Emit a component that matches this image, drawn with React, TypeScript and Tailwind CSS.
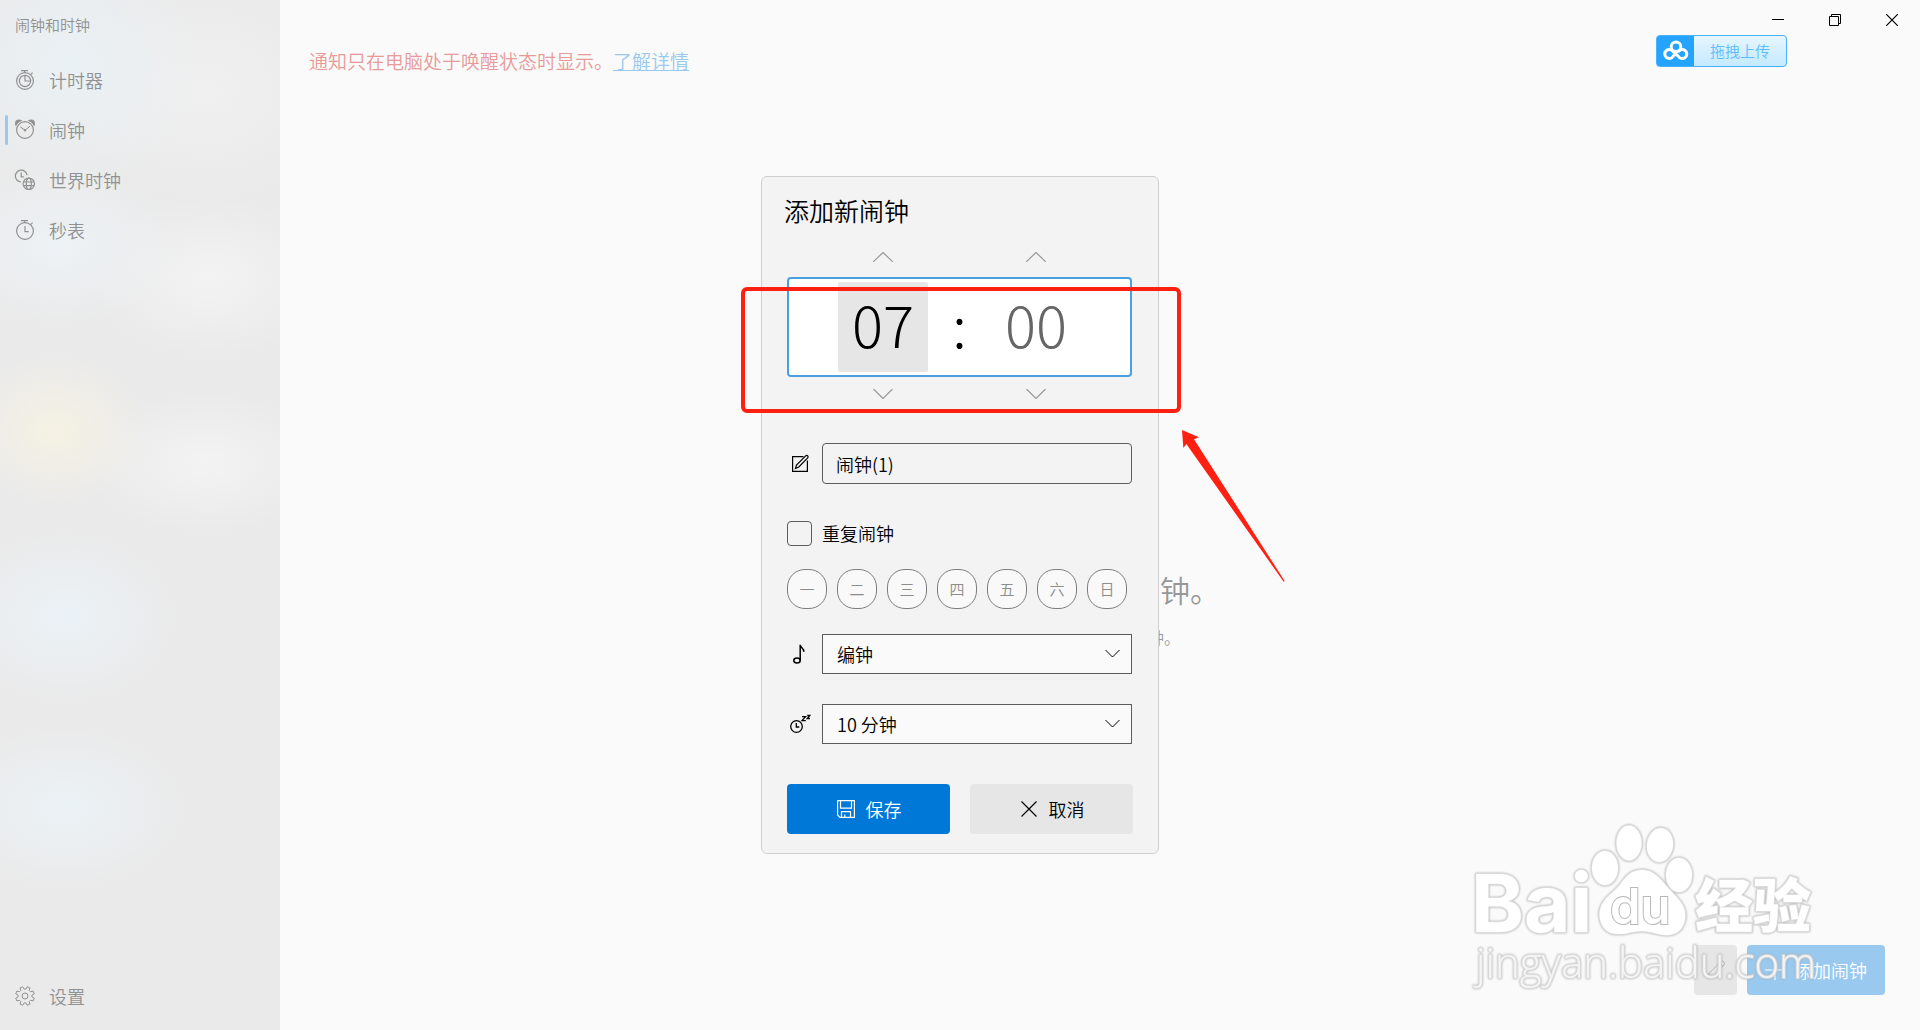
import React from "react";

const stroke = { fill: "none", stroke: "currentColor", strokeWidth: 1.2 };

const TimerIcon = () => (
    <svg width="20" height="20" viewBox="0 0 20 20" overflow="visible" {...stroke}>
        <circle cx="10" cy="11" r="8.4"/>
        <path d="M10 5.4a5.6 5.6 0 1 0 5.6 5.6H10z"/>
        <path d="M10 5.4a5.6 5.6 0 0 1 5.6 5.6M6 .7h7M9.5.7v2M15.6 4.6l2-2"/>
    </svg>
);

const AlarmIcon = () => (
    <svg width="20" height="20" viewBox="0 0 20 20" overflow="visible" {...stroke}>
        <circle cx="4" cy="3.6" r="4" fill="currentColor" stroke="none"/>
        <circle cx="16" cy="3.6" r="4" fill="currentColor" stroke="none"/>
        <circle cx="10" cy="10" r="9.8" fill="#ebebeb" stroke="none"/>
        <circle cx="10" cy="10" r="8.4"/>
        <path d="M5.2 6.800 10 10.200l5-4" strokeWidth="1"/>
        <circle cx="10" cy="10.200" r="1.200" fill="currentColor" stroke="none"/>
    </svg>
);

const WorldIcon = () => (
    <svg width="20" height="20" viewBox="0 0 20 20" overflow="visible" {...stroke}>
        <path d="M5.8 11.9A5.9 5.9 0 1 1 12.1 5.2M6.2 2.4V6.8h2.6"/>
        <circle cx="13.8" cy="13.8" r="5.7"/>
        <ellipse cx="13.8" cy="13.8" rx="2.5" ry="5.7"/>
        <path d="M8.6 12h10.4M8.6 15.6h10.4"/>
    </svg>
);

const StopwatchIcon = () => (
    <svg width="20" height="20" viewBox="0 0 20 20" overflow="visible" {...stroke}>
        <circle cx="10" cy="11" r="8.4"/>
        <path d="M10 6v5.6h3.6M6 .7h7M9.5.7v2M15.6 4.6l2-2"/>
    </svg>
);

// eight teeth, four points each
const gearPoints = Array.from({ length: 32 }, (_, i) => {
    const tooth = Math.floor(i / 4) * 45;
    const [offset, radius] = [[-15, 7], [-9, 9.5], [9, 9.5], [15, 7]][i % 4];
    const angle = ((tooth + offset + 22.5) * Math.PI) / 180;
    return `${10 + radius * Math.cos(angle)},${10 + radius * Math.sin(angle)}`;
}).join(" ");

const GearIcon = () => (
    <svg width="20" height="20" viewBox="0 0 20 20" {...stroke} strokeWidth={1} strokeLinejoin="round">
        <polygon points={gearPoints}/>
        <circle cx="10" cy="10" r="3"/>
    </svg>
);

const EditIcon = () => (
    <svg width="20" height="20" viewBox="0 0 20 20" {...stroke}>
        <path d="M13.5 2.6H2.6v14.8h14.8V6.5"/>
        <path d="M5.5 14.5l1-3.5 9.2-9.2c.6-.6 1.5-.6 2 0s.6 1.4 0 2L8.8 13z"/>
    </svg>
);

const NoteIcon = () => (
    <svg width="20" height="20" viewBox="0 0 20 20" {...stroke} strokeWidth={1.5}>
        <ellipse cx="7" cy="16.5" rx="3.2" ry="2.5"/>
        <path d="M10.2 16.5V.8c.2 3 3.8 3.2 3.6 7"/>
    </svg>
);

const SnoozeIcon = () => (
    <svg className="shrink-0" width="22" height="20" viewBox="0 0 22 20" {...stroke} strokeWidth={1.3}>
        <circle cx="7.5" cy="12.5" r="5.8"/>
        <path d="M7.3 9v4h3"/>
        <path d="M13 2.6h3.6l-3.6 4h3.8M18.200 1.500h2.600l-2.600 3h2.800"/>
    </svg>
);

const SaveIcon = () => (
    <svg width="20" height="20" viewBox="0 0 20 20" {...stroke}>
        <path d="M1.6 1.6h16.8v16.8H4l-2.4-2.4z"/>
        <path d="M4.5 1.6v7.6h11V1.6M5.5 18.4v-5.800h9v5.800M8.800 18.400v-2.800"/>
    </svg>
);

const CloseIcon = () => (
    <svg width="20" height="20" viewBox="0 0 20 20" {...stroke}>
        <path d="M2.5 2.5l15 15M17.5 2.5l-15 15"/>
    </svg>
);

const PencilIcon = () => (
    <svg width="20" height="20" viewBox="0 0 20 20" {...stroke} strokeWidth={1}>
        <path d="M1.5 18.5l1.4-5L14.5 2c1-1 2.4-1 3.3-.2s.9 2.300 0 3.300L6.400 17zM13.500 3l3.500 3.500M2.900 13.500 6.400 17"/>
    </svg>
);

const PlusIcon = () => (
    <svg width="20" height="20" viewBox="0 0 20 20" {...stroke}>
        <path d="M0 10h20M10 0v20"/>
    </svg>
);

const Chevron = ({ up = false }: { up?: boolean }) => (
    <svg width="20" height="10" viewBox="0 0 20 10" {...stroke}>
        <path d={up ? "M0 10 10 .5 20 10" : "M.5 0 10 9.5 19.5 0"}/>
    </svg>
);

const navItems = [
    { label: "计时器", icon: TimerIcon },
    { label: "闹钟", icon: AlarmIcon, active: true },
    { label: "世界时钟", icon: WorldIcon },
    { label: "秒表", icon: StopwatchIcon },
];

const days = ["一", "二", "三", "四", "五", "六", "日"];

type NavItemProps = {
    icon: React.ComponentType,
    label: string,
    active?: boolean
};

function NavItem({ icon: Icon, label, active }: NavItemProps) {
    return (
        <button className="relative flex h-[50px] w-full items-center gap-[14px] px-[15px] text-lg">
            { active && <span className="absolute left-[5px] h-[30px] w-[3px] rounded-full bg-[#99c9ef]"/> }
            <Icon/>
            { label }
        </button>
    );
}

function Sidebar() {
    return (
        <nav className="flex w-[280px] shrink-0 flex-col bg-[#eaeaea] bg-[radial-gradient(ellipse_130px_130px_at_70px_65px,#eaf1f5,transparent),radial-gradient(ellipse_140px_110px_at_205px_90px,#f0f0f0,transparent),radial-gradient(ellipse_120px_80px_at_60px_245px,#edf2f6,transparent),radial-gradient(ellipse_120px_80px_at_210px_278px,#f3f3f3,transparent),radial-gradient(ellipse_90px_75px_at_55px_430px,#f5f2e3,transparent),radial-gradient(ellipse_120px_70px_at_205px_463px,#f3f3f3,transparent),radial-gradient(ellipse_110px_85px_at_65px_617px,#ebf2f7,transparent),radial-gradient(ellipse_120px_80px_at_65px_808px,#ebf2f6,transparent)] pb-[9px] text-[#919191]">
            <h1 className="h-[55px] px-[15px] pt-[14px] text-[15px] leading-[22px]">闹钟和时钟</h1>
            { navItems.map(item => <NavItem key={item.label} {...item}/>) }
            <div className="mt-auto">
                <NavItem icon={GearIcon} label="设置"/>
            </div>
        </nav>
    );
}

function WindowControls() {
    return (
        <div className="flex h-[35px] pt-[14px] text-black">
            <button aria-label="最小化" className="flex w-[57px] items-start justify-center">
                <svg width="12" height="12" {...stroke} strokeWidth={1}><path d="M0 5.5h12"/></svg>
            </button>
            <button aria-label="还原" className="flex w-[57px] items-start justify-center">
                <svg width="12" height="12" {...stroke} strokeWidth={1}><path d="M.5 2.5h9v9h-9zM2.5 2.5v-2h9v9h-2"/></svg>
            </button>
            <button aria-label="关闭" className="flex w-[57px] items-start justify-center">
                <svg width="12" height="12" {...stroke} strokeWidth={1.2}><path d="M0 0l12 12M12 0 0 12"/></svg>
            </button>
        </div>
    );
}

function UploadBadge() {
    return (
        <button className="mr-[133px] flex h-8 w-[131px] overflow-hidden rounded border border-[#4fb0ff] bg-[#24a4ff]">
            <span className="flex h-full w-[37px] items-center justify-center text-white">
                <svg width="26" height="22" viewBox="0 0 26 22" {...stroke} strokeWidth={3}>
                    <circle cx="13" cy="6.8" r="4.8"/>
                    <path d="M13.5 12.5l-3.5 4A4.5 4.5 0 1 1 10 11.5l5.5 5a4.5 4.5 0 1 0 .5-5.5" strokeLinecap="round"/>
                </svg>
            </span>
            <span className="h-full flex-1 bg-linear-to-b from-[#e6f6ff] to-[#c4eaff] text-[15px] leading-[30px] text-[#5cbcff]">拖拽上传</span>
        </button>
    );
}

function TimePicker() {
    return (
        <>
            <div className="mt-2 flex h-10 items-center justify-center gap-[63px] text-[#999]">
                <button aria-label="增加小时" className="flex w-[90px] justify-center"><Chevron up/></button>
                <button aria-label="增加分钟" className="flex w-[90px] justify-center"><Chevron up/></button>
            </div>
            <div className="flex h-[100px] items-center justify-center rounded-sm border-2 border-[#4a9fe1] bg-white text-[58px] font-light">
                <input aria-label="小时" defaultValue="07" className="size-[90px] rounded-xs bg-[#e6e6e6] pb-2 text-center"/>
                <span className="w-[63px] pb-2 text-center leading-none">:</span>
                <input aria-label="分钟" defaultValue="00" className="size-[90px] pb-2 text-center text-[#666]"/>
            </div>
            <div className="flex h-[34px] items-center justify-center gap-[63px] text-[#999]">
                <button aria-label="减少小时" className="flex w-[90px] justify-center"><Chevron/></button>
                <button aria-label="减少分钟" className="flex w-[90px] justify-center"><Chevron/></button>
            </div>
        </>
    );
}

type SelectRowProps = {
    id: string,
    label: string,
    icon: React.ComponentType,
    value: string
};

function SelectRow({ id, label, icon: Icon, value }: SelectRowProps) {
    return (
        <div className="flex h-10 items-center">
            <label htmlFor={id} aria-label={label} className="flex w-[35px] shrink-0 justify-center pr-[9px]"><Icon/></label>
            <div className="relative flex-1">
                <select id={id} className="h-10 w-full appearance-none border border-[#5c5c5c] bg-[#fafafa] px-[14px] text-lg">
                    <option>{ value }</option>
                </select>
                <svg className="pointer-events-none absolute top-4 right-3" width="15" height="8" {...stroke} strokeWidth={1}>
                    <path d="M.5 0l7 7 7-7"/>
                </svg>
            </div>
        </div>
    );
}

function AlarmDialog() {
    return (
        <div className="fixed inset-0 flex items-center justify-center">
            <div role="dialog" aria-labelledby="dialog-title" className="relative w-[398px] rounded-md border border-[#cfcfcf] bg-[#f3f3f3] pt-5 pr-[26px] pb-[19px] pl-[25px] text-black">
                <h2 id="dialog-title" className="-mx-[3px] h-8 text-[25px] leading-[26px]">添加新闹钟</h2>
                <TimePicker/>
                <div className="mt-8 flex items-center">
                    <label htmlFor="alarm-name" aria-label="闹钟名称" className="flex w-[35px] shrink-0 justify-center pr-[9px]"><EditIcon/></label>
                    <input id="alarm-name" defaultValue="闹钟(1)" className="h-[41px] min-w-0 flex-1 rounded-sm border border-[#5c5c5c] px-[13px] text-lg"/>
                </div>
                <label className="mt-9 flex h-[26px] items-center gap-[10px] text-lg">
                    <input type="checkbox" className="size-[25px] appearance-none rounded-sm border border-[#5c5c5c]"/>
                    重复闹钟
                </label>
                <div className="mt-[23px] flex gap-[10px]">
                    { days.map(day => (
                        <button key={day} className="size-10 rounded-[18px] border border-[#7d7d7d] bg-[#f9f9f9] text-[15px] text-[#8c8c8c]">{ day }</button>
                    )) }
                </div>
                <div className="mt-[25px] flex flex-col gap-[30px]">
                    <SelectRow id="sound" label="声音" icon={NoteIcon} value="编钟"/>
                    <SelectRow id="snooze" label="暂停时间" icon={SnoozeIcon} value="10 分钟"/>
                </div>
                <div className="mt-10 -mr-px grid grid-cols-2 gap-5 text-lg">
                    <button className="flex h-[50px] items-center justify-center gap-[10px] rounded-sm bg-[#0078d7] text-white"><SaveIcon/>保存</button>
                    <button className="flex h-[50px] items-center justify-center gap-[10px] rounded-sm bg-[#e6e6e6]"><CloseIcon/>取消</button>
                </div>

                <div className="pointer-events-none absolute top-[110px] -right-[23px] -left-[21px] h-[126px] rounded-md border-4 border-[#ff2012]"/>
                <svg className="pointer-events-none absolute top-[253px] left-[420px]" width="103" height="152" viewBox="127 90 309 456">
                    <path d="M127 90l51 22-15 6L435 543l-3 2L140 132l-9 12z" fill="#ff2012"/>
                </svg>
            </div>
        </div>
    );
}

function Watermark() {
    return (
        <svg className="pointer-events-none fixed right-[100px] bottom-[30px] drop-shadow-[0_0_1px_#a8a8a8]" width="370" height="200" viewBox="0 0 370 200" fill="#fff" stroke="#dcdcdc" strokeWidth="2" paintOrder="stroke">
            <text x="21" y="132" fontSize="80" fontWeight="700" fontFamily="Inter, sans-serif">Bai</text>
            <ellipse cx="155" cy="68" rx="13" ry="17"/>
            <ellipse cx="179" cy="43" rx="12.5" ry="17.5"/>
            <ellipse cx="210" cy="45" rx="13" ry="17" transform="rotate(8 210 45)"/>
            <ellipse cx="229" cy="75" rx="13" ry="17"/>
            <path d="M192 70c-10 0-15 5-20 12-6 9-13 12-18 19-9 12-4 32 12 33 10 1 16-3 26-3s17 5 27 4c16-1 20-20 13-31-5-8-11-12-18-21-6-7-12-13-22-13z"/>
            <text x="160" y="124" fontSize="49" fontWeight="600" fontFamily="Inter, sans-serif" stroke="#b8b8b8">du</text>
            <text x="245" y="127" fontSize="58" fontWeight="900" fontFamily="'Noto Sans CJK SC', sans-serif">经验</text>
            <text x="26" y="178" fontSize="42" fontFamily="'Open Sans', sans-serif" opacity=".85">jingyan.baidu.com</text>
        </svg>
    );
}

export default function App() {
    return (
        <div className="flex min-h-screen bg-[#fafafa] font-[family-name:'Noto_Sans_CJK_SC',sans-serif] font-[350]">
            <Sidebar/>
            <main className="flex flex-1 flex-col">
                <header className="flex h-20 justify-between">
                    <p className="pt-[47px] pl-[29px] text-[19px] leading-7 text-[#e89a98]">
                        通知只在电脑处于唤醒状态时显示。<a href="#" className="text-[#99c9ef] underline">了解详情</a>
                    </p>
                    <div className="flex flex-col items-end">
                        <WindowControls/>
                        <UploadBadge/>
                    </div>
                </header>
                <section className="flex flex-1 flex-col items-center justify-center pt-[193px] text-[#979797]">
                    <h2 className="text-3xl leading-10">你没有任何闹钟。</h2>
                    <p className="mt-4 leading-6">在下面添加新的闹钟。</p>
                </section>
                <footer className="flex justify-end gap-[10px] pr-[35px] pb-[35px] text-lg">
                    <button aria-label="编辑闹钟" className="flex h-[50px] w-[43px] items-center justify-center rounded-sm bg-[#e6e6e6] text-[#b4b4b4]"><PencilIcon/></button>
                    <button className="flex h-[50px] w-[138px] items-center justify-center gap-[10px] rounded-sm bg-[#99c9ef] text-white"><PlusIcon/>添加闹钟</button>
                </footer>
            </main>
            <AlarmDialog/>
            <Watermark/>
        </div>
    );
}
